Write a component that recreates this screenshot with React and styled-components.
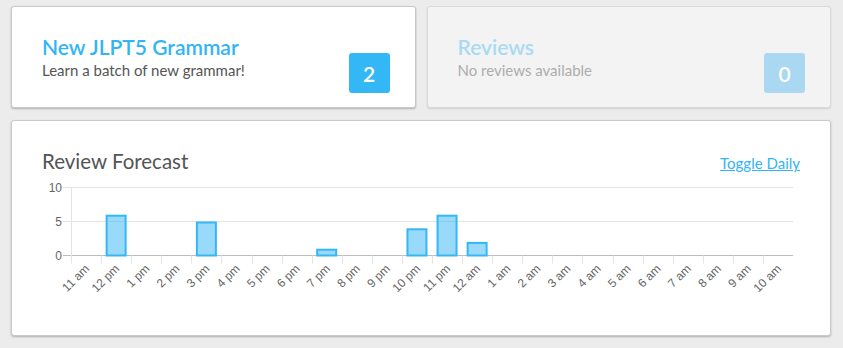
import React from "react";
import styled, { createGlobalStyle } from "styled-components";

const GlobalStyle = createGlobalStyle`
  body {
    margin: 0;
    background: #ececec;
    font-family: Lato, "Open Sans", sans-serif;
  }
`;

const forecast = [
  { label: "11 am", count: 0 },
  { label: "12 pm", count: 6 },
  { label: "1 pm", count: 0 },
  { label: "2 pm", count: 0 },
  { label: "3 pm", count: 5 },
  { label: "4 pm", count: 0 },
  { label: "5 pm", count: 0 },
  { label: "6 pm", count: 0 },
  { label: "7 pm", count: 1 },
  { label: "8 pm", count: 0 },
  { label: "9 pm", count: 0 },
  { label: "10 pm", count: 4 },
  { label: "11 pm", count: 6 },
  { label: "12 am", count: 2 },
  { label: "1 am", count: 0 },
  { label: "2 am", count: 0 },
  { label: "3 am", count: 0 },
  { label: "4 am", count: 0 },
  { label: "5 am", count: 0 },
  { label: "6 am", count: 0 },
  { label: "7 am", count: 0 },
  { label: "8 am", count: 0 },
  { label: "9 am", count: 0 },
  { label: "10 am", count: 0 },
];

const Page = styled.div`
  padding: 6px 12px 12px 11px;
`;

const TopRow = styled.div`
  display: grid;
  grid-template-columns: 1fr 1fr;
  gap: 11px;
`;

const Card = styled.div`
  box-sizing: border-box;
  background: ${p => (p.disabled ? "#f3f3f3" : "#fff")};
  border: 1px solid ${p => (p.disabled ? "#dadada" : "#c9c9c9")};
  border-radius: 3px;
  box-shadow: 0 1px 2px rgba(0, 0, 0, ${p => (p.disabled ? 0.12 : 0.25)});
`;

const LessonCard = styled(Card)`
  height: 102px;
  display: flex;
  align-items: flex-end;
  justify-content: space-between;
  padding: 0 25px 14px 30px;
`;

const LessonText = styled.div`
  padding-bottom: 13px;
`;

const LessonTitle = styled.div`
  font-size: 21px;
  line-height: 26px;
  font-weight: 600;
  color: ${p => (p.disabled ? "#a9daf5" : "#33b5f5")};
`;

const LessonSub = styled.div`
  font-size: 15px;
  line-height: 20px;
  color: ${p => (p.disabled ? "#adadad" : "#555")};
`;

const Badge = styled.div`
  width: 41px;
  height: 40px;
  border-radius: 3px;
  background: ${p => (p.disabled ? "#aad8f3" : "#33b7f5")};
  color: #fff;
  font-size: 21px;
  font-weight: 600;
  display: flex;
  align-items: center;
  justify-content: center;
`;

const ForecastCard = styled(Card)`
  margin-top: 12px;
  height: 216px;
  padding: 28px 30px 0 30px;
`;

const Header = styled.div`
  display: flex;
  justify-content: space-between;
  align-items: baseline;
`;

const Heading = styled.h2`
  margin: 0;
  font-size: 20.5px;
  font-weight: normal;
  color: #555;
`;

const ToggleLink = styled.a`
  font-size: 15px;
  color: #33b5f5;
  text-decoration: underline;
  cursor: pointer;
`;

const ChartSvg = styled.svg`
  display: block;
  margin-top: 5px;
  overflow: visible;
`;

const X0 = 29;
const X1 = 751;
const Y0 = 77.5;
const UNIT = 6.8;

const ForecastChart = ({ data }) => {
  const step = (X1 - X0) / data.length;
  return (
    <ChartSvg width="758" height="120">
      {[0, 5, 10].map(v => (
        <g key={v}>
          <line
            x1={X0 - 8}
            x2={X1}
            y1={Y0 - v * UNIT}
            y2={Y0 - v * UNIT}
            stroke={v === 0 ? "#bdbdbd" : "#e3e3e3"}
            strokeWidth="1"
          />
          <text
            x={X0 - 9}
            y={Y0 - v * UNIT + 4}
            textAnchor="end"
            fontFamily="'Liberation Sans', Arial, sans-serif"
            fontSize="12"
            fill="#666"
          >
            {v}
          </text>
        </g>
      ))}
      <line x1={X0 + 0.5} x2={X0 + 0.5} y1={Y0 - 10 * UNIT} y2={Y0 + 8} stroke="#e3e3e3" />
      {data.map((d, i) => {
        const x = X0 + step * i;
        const cx = x + step / 2;
        return (
          <g key={d.label}>
            {i > 0 && (
              <line x1={Math.round(x) + 0.5} x2={Math.round(x) + 0.5} y1={Y0} y2={Y0 + 8} stroke="#e3e3e3" />
            )}
            {d.count > 0 && (
              <rect
                x={cx - 9.5}
                y={Y0 - d.count * UNIT + 1}
                width="19"
                height={d.count * UNIT - 1}
                fill="rgba(51,181,245,0.5)"
                stroke="#33b7f5"
                strokeWidth="2"
              />
            )}
            <text
              transform={`translate(${cx + 4},${Y0 + 14}) rotate(-45)`}
              textAnchor="end"
              fontFamily="'Liberation Sans', Arial, sans-serif"
              fontSize="12"
              fill="#666"
            >
              {d.label}
            </text>
          </g>
        );
      })}
    </ChartSvg>
  );
};

const App = () => {
  return (
    <Page>
      <GlobalStyle />
      <TopRow>
        <LessonCard>
          <LessonText>
            <LessonTitle>New JLPT5 Grammar</LessonTitle>
            <LessonSub>Learn a batch of new grammar!</LessonSub>
          </LessonText>
          <Badge>2</Badge>
        </LessonCard>
        <LessonCard disabled>
          <LessonText>
            <LessonTitle disabled>Reviews</LessonTitle>
            <LessonSub disabled>No reviews available</LessonSub>
          </LessonText>
          <Badge disabled>0</Badge>
        </LessonCard>
      </TopRow>
      <ForecastCard>
        <Header>
          <Heading>Review Forecast</Heading>
          <ToggleLink>Toggle Daily</ToggleLink>
        </Header>
        <ForecastChart data={forecast} />
      </ForecastCard>
    </Page>
  );
};

export default App;
